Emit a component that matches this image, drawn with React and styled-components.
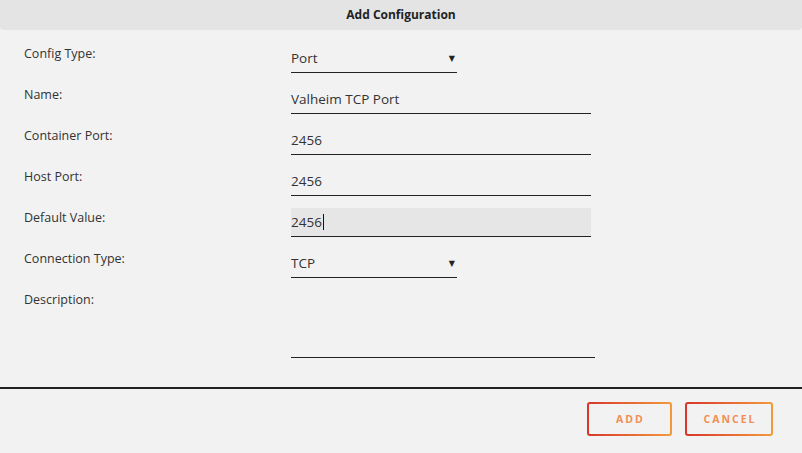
import React from 'react'
import styled, {createGlobalStyle} from 'styled-components'

const Global = createGlobalStyle`
	html, body {
		margin: 0;
		padding: 0;
		background: #f2f2f2;
	}
	body {
		font-family: 'Open Sans', 'DejaVu Sans', sans-serif;
		color: #333;
	}
`

const Dialog = styled.div`
	width: 802px;
	height: 453px;
	display: flex;
	flex-direction: column;
	background: #f2f2f2;
	overflow: hidden;
`

const Header = styled.div`
	height: 29px;
	flex: none;
	display: flex;
	align-items: center;
	justify-content: center;
	background: #e4e4e4;
	border-radius: 0 0 4px 4px;
	box-shadow: 0 1px 1px rgba(0, 0, 0, 0.06);
	font-size: 12px;
	font-weight: 700;
	color: #222;
`

const Form = styled.div`
	display: flex;
	flex-direction: column;
	padding: 15px 0 0 24px;
	height: 358px;
	flex: none;
	box-sizing: border-box;
`

const Row = styled.div`
	display: grid;
	grid-template-columns: 267px 1fr;
	align-items: start;
	height: ${p => (p.tall ? '80px' : '41px')};
	flex: none;
`

const Label = styled.div`
	font-size: 12.5px;
	line-height: 16px;
	padding-top: 2px;
	color: #333;
`

const Field = styled.div`
	width: ${p => p.width}px;
	height: ${p => (p.tall ? '67px' : '28px')};
	box-sizing: content-box;
	display: flex;
	align-items: center;
	justify-content: space-between;
	border-bottom: 1.5px solid #222;
	background: ${p => (p.focused ? '#e6e6e6' : 'transparent')};
	font-size: 13.5px;
	color: #333;
`

const Value = styled.span`
	display: inline-flex;
	align-items: center;
`

const Caret = styled.span`
	display: inline-block;
	width: 1px;
	height: 16px;
	margin-left: 1px;
	background: #111;
`

const Arrow = styled.span`
	font-size: 8px;
	color: #222;
	margin-right: 2px;
	margin-top: -1px;
`

const Divider = styled.div`
	height: 2px;
	flex: none;
	background: #222;
`

const Footer = styled.div`
	display: flex;
	justify-content: flex-end;
	gap: 13px;
	padding: 13px 29px 0 0;
`

const Button = styled.button`
	width: ${p => p.width}px;
	height: 34px;
	box-sizing: border-box;
	border: 2px solid transparent;
	border-radius: 3px;
	background: linear-gradient(#f2f2f2, #f2f2f2) padding-box,
		linear-gradient(90deg, #d8352c, #f39a3c) border-box;
	color: #f08f55;
	font-family: 'Open Sans', sans-serif;
	font-size: 10.5px;
	font-weight: 700;
	letter-spacing: 2px;
	padding: 0 0 0 2px;
	cursor: pointer;
`

const rows = [
	{label: 'Config Type:', value: 'Port', select: true},
	{label: 'Name:', value: 'Valheim TCP Port'},
	{label: 'Container Port:', value: '2456'},
	{label: 'Host Port:', value: '2456'},
	{label: 'Default Value:', value: '2456', focused: true},
	{label: 'Connection Type:', value: 'TCP', select: true},
]

const App = () => (
	<Dialog>
		<Global />
		<Header>Add Configuration</Header>
		<Form>
			{rows.map(({label, value, select, focused}) => (
				<Row key={label}>
					<Label>{label}</Label>
					<Field width={select ? 166 : 300} focused={focused}>
						<Value>
							{value}
							{focused && <Caret />}
						</Value>
						{select && <Arrow>▼</Arrow>}
					</Field>
				</Row>
			))}
			<Row tall>
				<Label>Description:</Label>
				<Field width={304} tall />
			</Row>
		</Form>
		<Divider />
		<Footer>
			<Button width={85}>ADD</Button>
			<Button width={88}>CANCEL</Button>
		</Footer>
	</Dialog>
)

export default App
